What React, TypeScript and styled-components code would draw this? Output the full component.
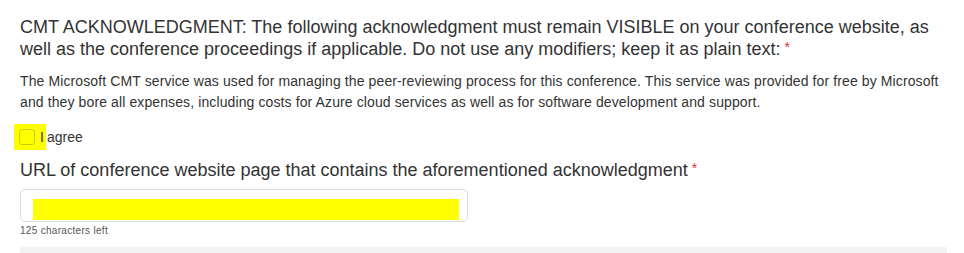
import React from "react";
import styled, { createGlobalStyle } from "styled-components";

const Global = createGlobalStyle`
  html, body { margin: 0; padding: 0; background: #fff; }
  body { font-family: "Liberation Sans", Arial, sans-serif; color: #333; }
`;

const Page = styled.div`
  width: 927px;
  padding: 16px 0 0 20px;
  display: flex;
  flex-direction: column;
`;

const Question = styled.div`
  font-size: 18px;
  line-height: 22px;
  color: #333;
`;

const Required = styled.span`
  color: #e0303a;
  font-size: 14px;
  line-height: 1;
  vertical-align: 3px;
  margin-left: 4px;
`;

const Statement = styled.p`
  margin: 11px 0 0;
  font-size: 14px;
  letter-spacing: 0.11px;
  line-height: 21px;
  color: #333;
`;

const CheckRow = styled.label`
  display: flex;
  align-items: center;
  margin: 11px 0 0 -6px;
  font-size: 14px;
  line-height: 26px;
  color: #333;
`;

const Highlight = styled.span`
  display: inline-flex;
  align-items: center;
  background: #ffff00;
  height: 26px;
  padding: 0 2px 0 5px;
`;

const Box = styled.span`
  display: inline-block;
  width: 14px;
  height: 14px;
  border: 1px solid #cccc00;
  border-radius: 3px;
  margin-right: 5px;
`;

const AgreeText = styled.span`
  margin-left: 1px;
`;

const UrlQuestion = styled(Question)`
  margin-top: 9px;
`;

const InputFrame = styled.div`
  margin-top: 8px;
  width: 446px;
  height: 31px;
  border: 1px solid #dcdcdc;
  border-radius: 5px;
  box-sizing: content-box;
  display: flex;
`;

const InputFill = styled.div`
  margin: 9px 0 0 12px;
  width: 426px;
  height: 21px;
  background: #ffff00;
`;

const Counter = styled.div`
  margin-top: 2px;
  font-size: 10px;
  letter-spacing: 0.3px;
  line-height: 14px;
  color: #555;
`;

const Divider = styled.div`
  margin-top: 9px;
  height: 8px;
  background: #f3f3f3;
`;

export default function App() {
  return (
    <>
      <Global />
      <Page>
        <Question>
          CMT ACKNOWLEDGMENT: The following acknowledgment must remain VISIBLE on your conference website, as well as the conference proceedings if applicable. Do not use any modifiers; keep it as plain text:
          <Required>*</Required>
        </Question>
        <Statement>
          The Microsoft CMT service was used for managing the peer-reviewing process for this conference. This service was provided for free by Microsoft and they bore all expenses, including costs for Azure cloud services as well as for software development and support.
        </Statement>
        <CheckRow>
          <Highlight>
            <Box />I
          </Highlight>
          <AgreeText>agree</AgreeText>
        </CheckRow>
        <UrlQuestion>
          URL of conference website page that contains the aforementioned acknowledgment
          <Required>*</Required>
        </UrlQuestion>
        <InputFrame>
          <InputFill />
        </InputFrame>
        <Counter>125 characters left</Counter>
        <Divider />
      </Page>
    </>
  );
}
